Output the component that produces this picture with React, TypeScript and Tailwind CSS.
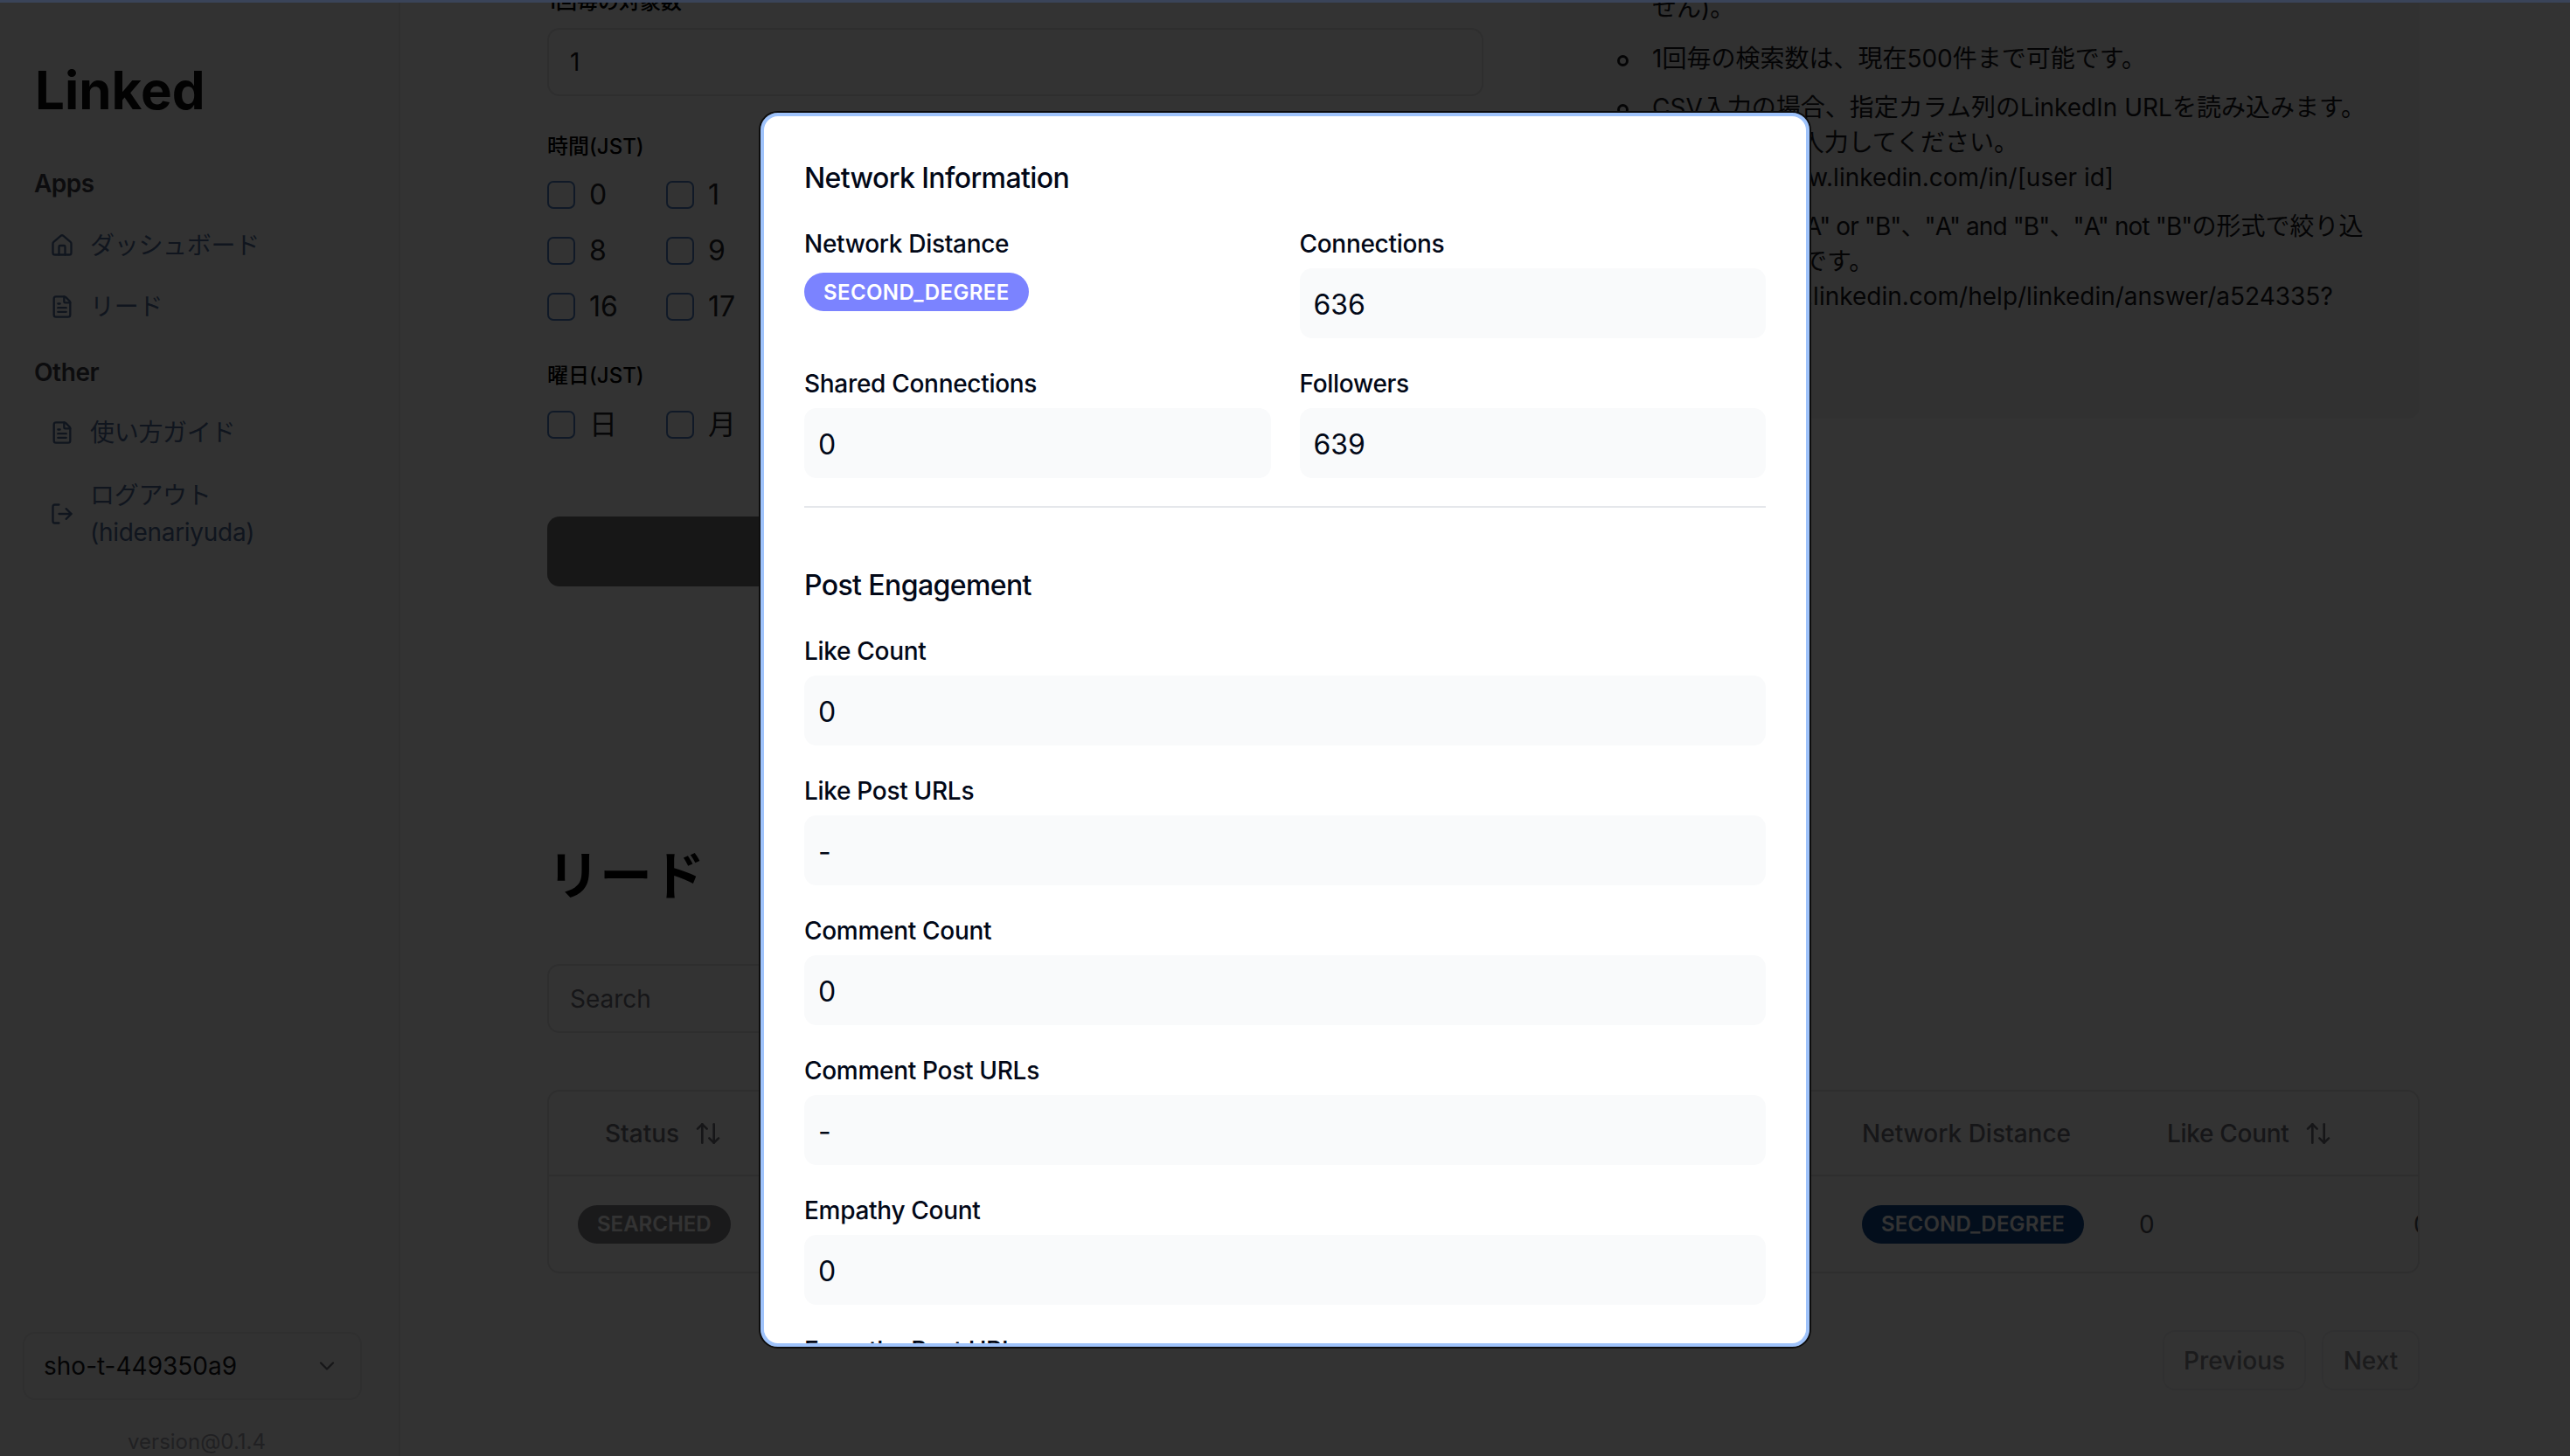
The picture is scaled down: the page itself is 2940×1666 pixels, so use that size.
import React from "react";
import { ArrowUpDown, ChevronDown, FileText, Home, LogOut } from "lucide-react";

const hours = [
  [0, 1],
  [8, 9],
  [16, 17],
];

const NavItem = ({ icon, children }: { icon: React.ReactNode; children: React.ReactNode }) => (
  <div className="flex items-center gap-[18px] pl-[57px] text-[28px] leading-[42px] tracking-[-0.3px] text-[#4f6c96]">
    <span className="w-[28px] shrink-0">{icon}</span>
    <div>{children}</div>
  </div>
);

const Check = ({ label }: { label: string | number }) => (
  <div className="flex w-[136px] items-center gap-[16px] text-[32px] leading-[40px] text-[#27272a]">
    <span className="h-[32px] w-[32px] shrink-0 rounded-[7px] border-2 border-[#4f7fc0]" />
    {label}
  </div>
);

const Field = ({ label, value }: { label: string; value: string }) => (
  <div>
    <div className="mb-[8px] text-[28px] font-medium leading-[40px] tracking-[-0.3px] text-[#020817]">{label}</div>
    <div className="flex h-[80px] items-center rounded-[14px] bg-[#f9fafb] px-[16px] pt-[3px] text-[32px] text-[#020817]">
      {value}
    </div>
  </div>
);

const SortHead = ({ label }: { label: string }) => (
  <div className="flex items-center gap-[17px]">
    {label}
    <ArrowUpDown size={32} strokeWidth={2} />
  </div>
);

const Bullet = ({ children }: { children: React.ReactNode }) => (
  <li className="-ml-[40px] flex items-start gap-[27px]">
    <span className="mt-[16px] h-[13px] w-[13px] shrink-0 rounded-full border-[3px] border-[#18181b]" />
    <span>{children}</span>
  </li>
);

export default function App() {
  return (
    <div className="relative h-[1666px] w-[2940px] overflow-hidden bg-white font-['Inter','Noto_Sans_CJK_JP',sans-serif]">
      <div className="flex h-full">
        {/* sidebar */}
        <aside className="flex h-full w-[458px] shrink-0 flex-col border-r-2 border-[#e8e8ea] bg-[#fbfbfb]">
          <div className="pl-[40px] pt-[66px] text-[60px] font-bold leading-[74px] text-[#0a0a0a]">Linked</div>
          <div className="pl-[39px] pt-[50px] text-[28px] font-semibold leading-[40px] tracking-[-0.5px] text-[#3f3f46]">Apps</div>
          <div className="flex flex-col gap-[28px] pt-[30px]">
            <NavItem icon={<Home size={28} />}>ダッシュボード</NavItem>
            <NavItem icon={<FileText size={28} />}>リード</NavItem>
          </div>
          <div className="pl-[39px] pt-[34px] text-[28px] font-semibold leading-[40px] tracking-[-0.4px] text-[#3f3f46]">Other</div>
          <div className="flex flex-col gap-[30px] pt-[28px]">
            <NavItem icon={<FileText size={28} />}>使い方ガイド</NavItem>
            <NavItem icon={<LogOut size={28} />}>
              ログアウト
              <br />
              (hidenariyuda)
            </NavItem>
          </div>
          <div className="mt-auto pl-[26px] pr-[42px]">
            <div className="flex h-[78px] items-center justify-between rounded-[14px] border-2 border-[#e8e8ea] pl-[22px] pr-[24px] text-[28px] text-[#18181b]">
              sho-t-449350a9
              <ChevronDown size={28} className="text-[#71717a]" />
            </div>
          </div>
          <div className="-mb-[2px] pr-[6px] pt-[30px] text-center text-[24px] leading-[36px] text-[#a1a1aa]">version@0.1.4</div>
        </aside>

        {/* main */}
        <main className="min-w-0 flex-1 pl-[168px] pr-[172px]">
          <div className="-mt-[18px] flex gap-[65px]">
            <div className="w-[1071px] shrink-0">
              <div className="mb-[10px] text-[24px] font-medium leading-[40px] text-black">1回毎の対象数</div>
              <div className="flex h-[78px] items-center rounded-[14px] border-2 border-[#e4e4e7] px-[24px] text-[28px] text-[#18181b]">
                1
              </div>
              <div className="mt-[40px] text-[24px] font-medium leading-[36px] text-black">時間(JST)</div>
              <div className="mt-[17px] flex flex-col gap-[24px]">
                {hours.map((row, i) => (
                  <div key={i} className="flex">
                    {row.map((h) => (
                      <Check key={h} label={h} />
                    ))}
                  </div>
                ))}
              </div>
              <div className="mt-[41px] text-[24px] font-medium leading-[36px] text-black">曜日(JST)</div>
              <div className="mt-[18px] flex">
                <Check label="日" />
                <Check label="月" />
              </div>
              <div className="mt-[85px] h-[80px] rounded-[14px] bg-[#767676]" />
            </div>

            <div className="h-[497px] min-w-0 flex-1 rounded-[14px] bg-[#f2f2f3] pl-[128px] pr-[40px] pt-[7px] text-[28px] leading-[40px] text-[#18181b]">
              <div>せん)。</div>
              <ul className="mt-[18px]">
                <Bullet>1回毎の検索数は、現在500件まで可能です。</Bullet>
                <div className="h-[16px]" />
                <Bullet>CSV入力の場合、指定カラム列のLinkedIn URLを読み込みます。</Bullet>
                <li className="pl-[86px]">URLを入力してください。</li>
                <li className="pl-[38px]">https://www.linkedin.com/in/[user id]</li>
                <li className="mt-[16px] whitespace-nowrap pl-[165px]">
                  <span className="tracking-[-0.9px]">"A" or "B"、"A" and "B"、"A" not "B"</span>の形式で絞り込
                </li>
                <li className="pl-[60px]">みが可能です。</li>
                <li className="pl-[15px]">https://www.linkedin.com/help/linkedin/answer/a524335?</li>
              </ul>
            </div>
          </div>

          <div className="mt-[291px] text-[60px] font-bold leading-[80px] text-black">リード</div>
          <div className="mt-[61px] flex h-[79px] w-[1071px] items-center rounded-[14px] border-2 border-[#e4e4e7] px-[24px] text-[28px] text-[#71717a]">
            Search
          </div>

          <div className="mt-[65px] h-[210px] overflow-hidden rounded-[14px] border-2 border-[#e4e4e7] text-[28px]">
            <div className="flex h-[97px] items-center border-b-2 border-[#e4e4e7] font-medium text-[#71717a]">
              <div className="w-[1502px] shrink-0 pl-[64px]">
                <SortHead label="Status" />
              </div>
              <div className="w-[349px] shrink-0">Network Distance</div>
              <div className="tracking-[-0.3px]">
                <SortHead label="Like Count" />
              </div>
            </div>
            <div className="flex h-[109px] items-center text-[#52525b]">
              <div className="w-[1502px] shrink-0 pl-[33px]">
                <span className="inline-flex h-[44px] items-center rounded-full bg-[#828287] px-[22px] text-[24px] font-semibold text-white">
                  SEARCHED
                </span>
              </div>
              <div className="w-[317px] shrink-0">
                <span className="inline-flex h-[44px] items-center rounded-full bg-[#0f468c] px-[22px] text-[24px] font-semibold tracking-[0.2px] text-white">
                  SECOND_DEGREE
                </span>
              </div>
              <div className="w-[314px] shrink-0">0</div>
              <div className="shrink-0">0</div>
            </div>
          </div>

          <div className="mt-[65px] flex justify-end gap-[18px]">
            <div className="flex h-[69px] w-[164px] items-center justify-center rounded-[14px] border-2 border-[#f1f1f2] text-[28px] font-medium text-[#85858c]">
              Previous
            </div>
            <div className="flex h-[69px] w-[112px] items-center justify-center rounded-[14px] border-2 border-[#f1f1f2] text-[28px] font-medium text-[#85858c]">
              Next
            </div>
          </div>
        </main>
      </div>

      {/* dialog overlay */}
      <div className="absolute inset-0 bg-black/80" />
      <div className="absolute inset-x-0 top-0 h-[3px] bg-[#3a4459]" />

      <div className="absolute left-[868px] top-[127px] h-[1416px] w-[1204px] rounded-[22px] border-2 border-[#0d0d0d]">
        <div className="h-full overflow-hidden rounded-[20px] border-[4px] border-[#9fc3fb] bg-white px-[46px] pt-[47px]">
          <div className="text-[32px] font-medium leading-[48px] tracking-[-0.6px] text-[#020817]">Network Information</div>
          <div className="mt-[31px] grid grid-cols-2 gap-x-[33px] gap-y-[32px]">
            <div>
              <div className="mb-[13px] text-[28px] font-medium leading-[40px] tracking-[-0.3px] text-[#020817]">Network Distance</div>
              <span className="inline-flex h-[44px] items-center rounded-full bg-[#7b83ff] px-[22px] pt-[2px] text-[24px] font-semibold tracking-[0.4px] text-white">
                SECOND_DEGREE
              </span>
            </div>
            <Field label="Connections" value="636" />
            <Field label="Shared Connections" value="0" />
            <Field label="Followers" value="639" />
          </div>
          <div className="mt-[32px] h-[2px] bg-[#e5e7eb]" />
          <div className="mt-[65px] text-[32px] font-medium leading-[48px] tracking-[-0.6px] text-[#020817]">Post Engagement</div>
          <div className="mt-[31px] flex flex-col gap-[32px]">
            <Field label="Like Count" value="0" />
            <Field label="Like Post URLs" value="-" />
            <Field label="Comment Count" value="0" />
            <Field label="Comment Post URLs" value="-" />
            <Field label="Empathy Count" value="0" />
            <Field label="Empathy Post URLs" value="-" />
          </div>
        </div>
      </div>
    </div>
  );
}
